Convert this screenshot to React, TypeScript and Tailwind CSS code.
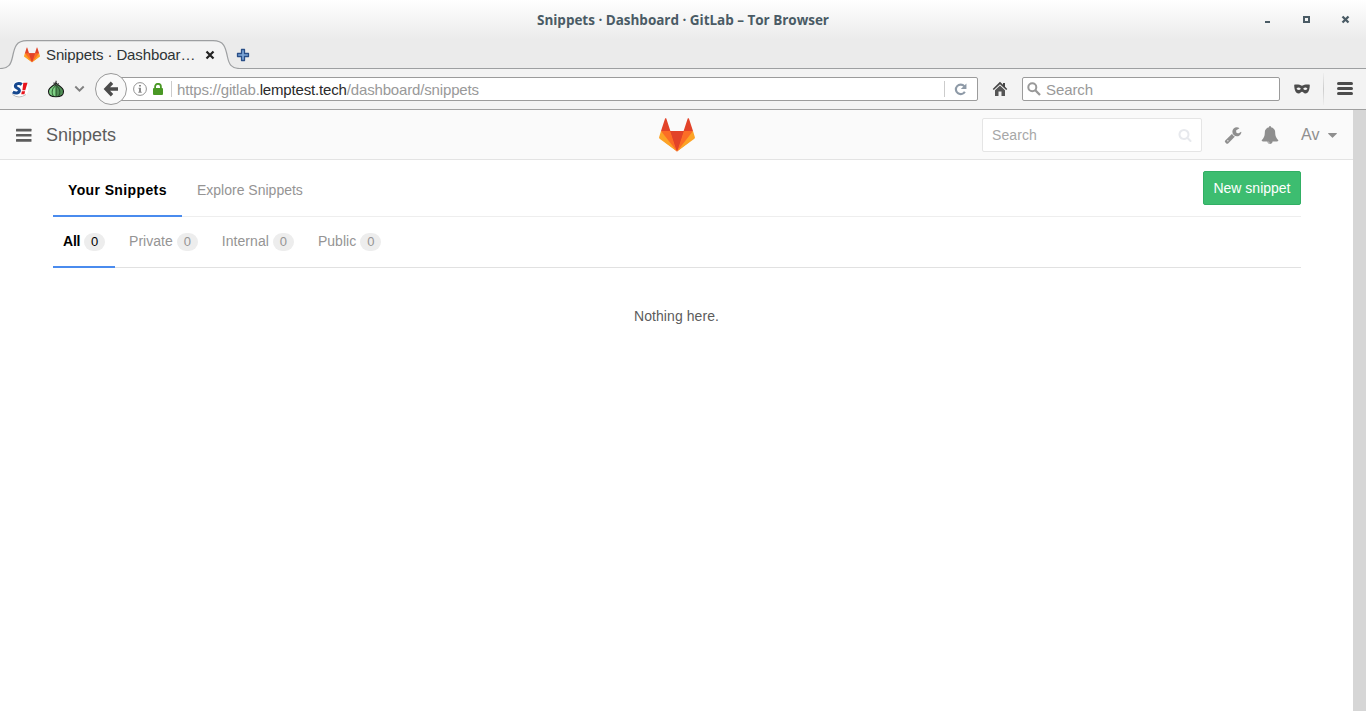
import React from "react";

function Fox({ className }: { className: string }) {
  return (
    <svg viewBox="0 0 36 36" className={className}>
      <path fill="#e24329" d="M2 14l9.38 9v-9l-4-12.28c-.205-.632-1.176-.632-1.38 0z" />
      <path fill="#e24329" d="M34 14l-9.38 9v-9l4-12.28c.205-.632 1.176-.632 1.38 0z" />
      <path fill="#e24329" d="M18 34.38L3 14h30z" />
      <path fill="#fc6d26" d="M18 34.38L11.38 14H2l4 11z" />
      <path fill="#fc6d26" d="M18 34.38L24.62 14H34l-4 11z" />
      <path fill="#e24329" d="M18 34.38L11.38 14h13.240z" />
      <path fill="#fca326" d="M2 14L.1 20.16c-.18.565 0 1.2.5 1.56l17.42 12.66z" />
      <path fill="#fca326" d="M34 14l1.9 6.16c.18.565 0 1.2-.5 1.56L18 34.38z" />
    </svg>
  );
}

function TitleBar() {
  return (
    <div className="flex h-10 items-center bg-linear-to-b from-white to-[#ebebeb]">
      <div className="w-[118px]" />
      <div className="flex-1 text-center font-['Open_Sans',sans-serif] text-[13.500px] leading-[18px] font-bold tracking-[-0.02px] whitespace-nowrap text-[#4a5b65]">
        Snippets · Dashboard · GitLab – Tor Browser
      </div>
      <svg className="h-10 w-[118px] shrink-0" viewBox="0 0 118 40" fill="none" stroke="#4a5b65" strokeWidth="2">
        <path d="M17 22h5" />
        <path d="M56 17h5v5h-5z" />
        <path d="M94.500 16.500l6 6M100.500 16.500l-6 6" strokeWidth="2.300" />
      </svg>
    </div>
  );
}

function TabStrip() {
  return (
    <div className="relative flex h-[29px] items-center bg-[#ebebeb]">
      <svg className="absolute inset-0 h-[29px] w-full" fill="none">
        <path d="M0 28.500C9 28.500 11 24 12.500 17C14.500 7 16 .7 27 .7H213C224 .7 225.500 7 227.500 17C229 24 231 28.500 240 28.500V29H0z" fill="#f3f3f3" />
        <path d="M0 28.500C9 28.500 11 24 12.500 17C14.500 7 16 .7 27 .7H213C224 .7 225.500 7 227.500 17C229 24 231 28.500 240 28.500H1366" stroke="#9d9fa1" strokeWidth="1.200" />
      </svg>
      <div className="relative flex w-full items-center pl-6">
        <Fox className="size-4" />
        <span className="ml-1.5 w-[150px] text-[15px] leading-[18px] tracking-[-0.12px] whitespace-nowrap text-[#2e3436]">Snippets · Dashboar…</span>
        <svg className="ml-[9px] size-[10px]" viewBox="0 0 10 10" stroke="#222" strokeWidth="2.200">
          <path d="M1.500 1.500l7 7M8.500 1.500l-7 7" />
        </svg>
        <svg className="ml-[21px] size-[14px]" viewBox="0 0 14 14">
          <path d="M5.500 1.500h3v4h4v3h-4v4h-3v-4h-4v-3h4z" fill="#7ba4d6" stroke="#2a4f88" strokeWidth="1.300" strokeLinejoin="round" />
        </svg>
      </div>
    </div>
  );
}

function Onion() {
  return (
    <svg className="ml-[18px] size-[18px]" viewBox="0 0 18 18">
      <path d="M9 3C7.500 5.500 1.500 7 1.500 11.500C1.500 15 4.500 16.800 9 16.800S16.500 15 16.500 11.500C16.500 7 10.500 5.500 9 3z" fill="#7fd085" stroke="#151515" strokeWidth="1.100" />
      <path d="M9 4C12 7 16 7.500 16 11.500C16 15 13 16.300 9 16.300z" fill="#0b2a0e" opacity=".4" />
      <path d="M9 5v11.500M8.300 6C4.500 9 4.500 13 6.500 16.300M9.700 6c3.800 3 3.800 7 1.800 10.300" fill="none" stroke="#173d1a" strokeWidth=".8" />
      <path d="M9 6C8.300 4.500 8.500 2.500 9.300 0.800M8 5.500L6.800 2.500M10 5.500l1.500-2.300" fill="none" stroke="#333" strokeWidth="1.100" />
    </svg>
  );
}

function Toolbar() {
  return (
    <div className="flex h-[41px] items-center border-b border-[#a0a0a0] bg-[#f3f3f3]">
      <svg className="ml-[11px] size-[18px]" viewBox="0 0 18 18">
        <circle cx="9" cy="9" r="8.500" fill="#fff" />
        <path d="M1.500 14.500Q8 19.500 15 14.500" fill="none" stroke="#bbb" />
        <path d="M10.800 4.500C8.500 2.700 4.500 3.400 4.300 6C4.100 8.500 8.800 8 8.400 10.800C8.100 13.300 4.600 13.600 1.800 12" fill="none" stroke="#16488f" strokeWidth="3" />
        <path d="M12.300 2.800h4.200l-2.200 7.400h-2.900zM10.900 11.300h3.200l-.7 3h-3.200z" fill="#e8131b" />
      </svg>
      <Onion />
      <svg className="ml-[9px] h-[8px] w-[11px]" viewBox="0 0 11 8" fill="none" stroke="#808080" strokeWidth="1.900">
        <path d="M1.300 1.500l4.200 4.200 4.200-4.200" />
      </svg>
      <div className="z-10 ml-[10px] flex size-8 shrink-0 items-center justify-center rounded-full border border-[#999] bg-[#f9f9f9]">
        <svg className="size-4" viewBox="0 0 16 16" fill="none" stroke="#4c4c4c" strokeWidth="3.400">
          <path d="M9 1.800L3 8l6 6.200M3.500 8H15" />
        </svg>
      </div>
      <div className="-ml-4 flex h-6 w-[867px] items-center rounded-r-xs border border-[#9b9b9b] bg-white pl-[21px]">
        <svg className="size-[14px]" viewBox="0 0 14 14">
          <circle cx="7" cy="7" r="6.400" fill="none" stroke="#929292" />
          <path d="M6 2.900h2v1.700H6zM5.500 5.800H8v4h.7v1H5.300v-1H6v-3h-.5z" fill="#8a8a8a" />
        </svg>
        <svg className="ml-[6px] h-3 w-[10px]" viewBox="0 0 10 12">
          <path d="M2.100 6V3.700a2.900 2.900 0 015.800 0V6" fill="none" stroke="#4a9825" strokeWidth="1.800" />
          <rect y="5" width="10" height="7" rx="1" fill="#4a9825" />
        </svg>
        <div className="ml-[8px] h-4 w-px bg-[#ccc]" />
        <div className="ml-[5px] flex-1 pt-px text-[15px] leading-[18px] tracking-[-0.16px] whitespace-nowrap text-[#999]">
          https://gitlab.<span className="text-[#2a2a2a]">lemptest.tech</span>/dashboard/snippets
        </div>
        <div className="h-4 w-px bg-[#ccc]" />
        <svg className="mr-[10px] ml-[9px] size-[13px]" viewBox="0 0 12 12">
          <path d="M9.500 3A4.400 4.400 0 1010 8" fill="none" stroke="#8e9aa7" strokeWidth="2" />
          <path d="M11.500.4v5.200H6.300z" fill="#8e9aa7" />
        </svg>
      </div>
      <svg className="ml-[14px] size-4" viewBox="0 0 16 16">
        <path d="M8 .8L.7 8.100l1.100 1L8 3.200l6.200 5.900 1.100-1L13 5.800V2h-2v1.800z" fill="#454545" />
        <path d="M3 9.300l5-4.700 5 4.700V15H9.500v-4.500h-3V15H3z" fill="#555" />
      </svg>
      <div className="ml-[14px] flex h-6 w-[258px] items-center rounded-xs border border-[#9b9b9b] bg-white pl-1">
        <svg className="size-[14px]" viewBox="0 0 14 14" fill="none" stroke="#999" strokeWidth="2">
          <circle cx="5.300" cy="5.300" r="4" />
          <path d="M8.300 8.300l4.700 4.700" strokeWidth="2.300" />
        </svg>
        <span className="ml-[5px] pt-px text-[15px] leading-[18px] tracking-[-0.1px] text-[#999]">Search</span>
      </div>
      <svg className="ml-[14px] h-[10px] w-4" viewBox="0 0 16 10">
        <path fillRule="evenodd" d="M8 1.800C5.500.2 2.500.2.200.700C.2 5 1.500 9.500 4.500 9.500C6.500 9.500 7 7.800 8 7.800S9.500 9.500 11.500 9.500C14.500 9.500 15.800 5 15.800.7C13.500.2 10.500.2 8 1.800zM2.500 4.700Q4.500 2.500 6.900 4.800Q4.700 7.200 2.500 4.700zM9.100 4.800Q11.500 2.500 13.500 4.700Q11.300 7.200 9.100 4.800z" fill="#4c4c4c" />
      </svg>
      <div className="ml-[13px] h-8 w-px bg-linear-to-b from-[#eee] via-[#ccc] to-[#eee]" />
      <div className="ml-[13px] flex w-4 flex-col gap-[2px] pb-px">
        <div className="h-[3px] rounded-xs bg-[#4c4c4c]" />
        <div className="h-[3px] rounded-xs bg-[#4c4c4c]" />
        <div className="h-[3px] rounded-xs bg-[#4c4c4c]" />
      </div>
    </div>
  );
}

function Header() {
  return (
    <header className="flex h-[50px] items-center border-b border-[#e3e3e3] bg-[#fafafa]">
      <div className="flex flex-1 items-center pl-4">
        <svg className="h-[14px] w-4" viewBox="0 0 16 14" fill="#5c5c5c">
          <rect y=".8" width="15.500" height="2.700" rx=".5" />
          <rect y="5.900" width="15.500" height="2.700" rx=".5" />
          <rect y="11" width="15.500" height="2.700" rx=".5" />
        </svg>
        <h1 className="ml-[14px] pt-px text-[18px] leading-6 text-[#5c5c5c]">Snippets</h1>
      </div>
      <Fox className="size-9" />
      <div className="flex flex-1 items-center justify-end pr-4">
        <div className="flex h-[34px] w-[220px] items-center justify-between rounded-xs border border-[#e5e5e5] bg-white pr-[9px] pl-[9px]">
          <span className="text-sm tracking-[0.1px] text-[#a7a7a7]">Search</span>
          <svg className="size-[14px]" viewBox="0 0 1792 1792" fill="#e7e9ed">
            <path d="M1216 832q0-185-131.500-316.500t-316.500-131.500-316.500 131.500-131.500 316.500 131.500 316.500 316.500 131.500 316.500-131.500 131.500-316.500zm512 832q0 52-38 90t-90 38q-54 0-90-38l-343-342q-179 124-399 124-143 0-273.500-55.500t-225-150-150-225-55.500-273.500 55.500-273.500 150-225 225-150 273.500-55.500 273.500 55.500 225 150 150 225 55.500 273.500q0 220-124 399l343 343q37 37 37 90z" />
          </svg>
        </div>
        <svg className="ml-[22px] size-[18px]" viewBox="0 0 1792 1792" fill="#8f8f8f">
          <path d="M448 1472q0-26-19-45t-45-19-45 19-19 45 19 45 45 19 45-19 19-45zm644-420l-682 682q-37 37-90 37-52 0-91-37l-106-108q-38-36-38-90 0-53 38-91l681-681q39 98 114.500 173.500t173.500 114.500zm634-435q0 39-23 106-47 134-164.500 217.500t-258.500 83.500q-185 0-316.500-131.500t-131.500-316.500 131.500-316.500 316.500-131.500q58 0 121.500 16.500t107.500 46.500q16 11 16 28t-16 28l-293 169v224l193 107q5-3 79-48.500t135.500-81 70.500-35.500q15 0 23.500 10t8.500 25z" />
        </svg>
        <svg className="ml-[19px] size-[18px]" viewBox="0 0 1792 1792" fill="#8f8f8f">
          <path d="M912 1696q0-16-16-16-59 0-101.500-42.500t-42.500-101.500q0-16-16-16t-16 16q0 73 51.500 124.500t124.500 51.500q16 0 16-16zm816-288q0 52-38 90t-90 38h-448q0 106-75 181t-181 75-181-75-75-181h-448q-52 0-90-38t-38-90q50-42 91-88t85-119.500 74.500-158.500 50-206 19.500-260q0-152 117-282.500t307-158.500q-8-19-8-39 0-40 28-68t68-28 68 28 28 68q0 20-8 39 190 28 307 158.500t117 282.500q0 139 19.500 260t50 206 74.500 158.500 85 119.500 91 88z" />
        </svg>
        <span className="ml-[22px] w-[19px] pt-px text-[16px] leading-5 whitespace-nowrap text-[#8f8f8f]">Av</span>
        <svg className="mt-[2px] ml-2 h-[5px] w-[9px]" viewBox="0 0 9 5" fill="#8f8f8f">
          <path d="M.5 0h8q.6.200.3.700L4.900 4.600q-.4.400-.8 0L.2.700Q-.1.200.5 0z" />
        </svg>
      </div>
    </header>
  );
}

function Filter({ label, active }: { label: string; active?: boolean }) {
  return (
    <div className={active ? "-mb-px flex h-[51px] w-[62px] items-start border-b-2 border-[#4a8bee] pt-[14px] pl-[10px] text-black" : "flex items-start px-[10px] pt-[14px] text-[#959494]"}>
      <span className={active ? "w-[17px] text-sm font-bold tracking-[-0.2px]" : "text-sm tracking-[0.04px]"}>{label}</span>
      <span className="mt-[2px] ml-1 flex h-[18px] w-[21px] shrink-0 items-center justify-center rounded-full bg-[#ededed] text-[13px]">0</span>
    </div>
  );
}

export default function App() {
  return (
    <div className="flex h-[711px] w-[1366px] flex-col overflow-hidden bg-white font-['Liberation_Sans',sans-serif]">
      <TitleBar />
      <TabStrip />
      <Toolbar />
      <div className="flex flex-1">
        <div className="flex flex-1 flex-col">
          <Header />
          <main className="mr-[52px] ml-[53px]">
            <div className="flex h-[57px] items-stretch border-b border-[#eee] text-sm">
              <div className="-mb-px w-[129px] border-b-2 border-[#4a8bee] pt-5 pl-[15px] font-bold tracking-[0.38px] whitespace-nowrap text-black">Your Snippets</div>
              <div className="pt-5 pl-[15px] text-[#959494]">Explore Snippets</div>
              <button className="mt-[11px] ml-auto h-[34px] w-[98px] rounded-xs border border-[#31af64] bg-[#3dbd70] text-white">New snippet</button>
            </div>
            <div className="flex h-[51px] gap-[4px] border-b border-[#e1e1e1]">
              <Filter label="All" active />
              <Filter label="Private" />
              <Filter label="Internal" />
              <Filter label="Public" />
            </div>
            <p className="mt-[38px] pr-px text-center text-sm tracking-[0.08px] text-[#5c5c5c]">Nothing here.</p>
          </main>
        </div>
        <div className="w-[13px] bg-[#d6d6d6]" />
      </div>
    </div>
  );
}
